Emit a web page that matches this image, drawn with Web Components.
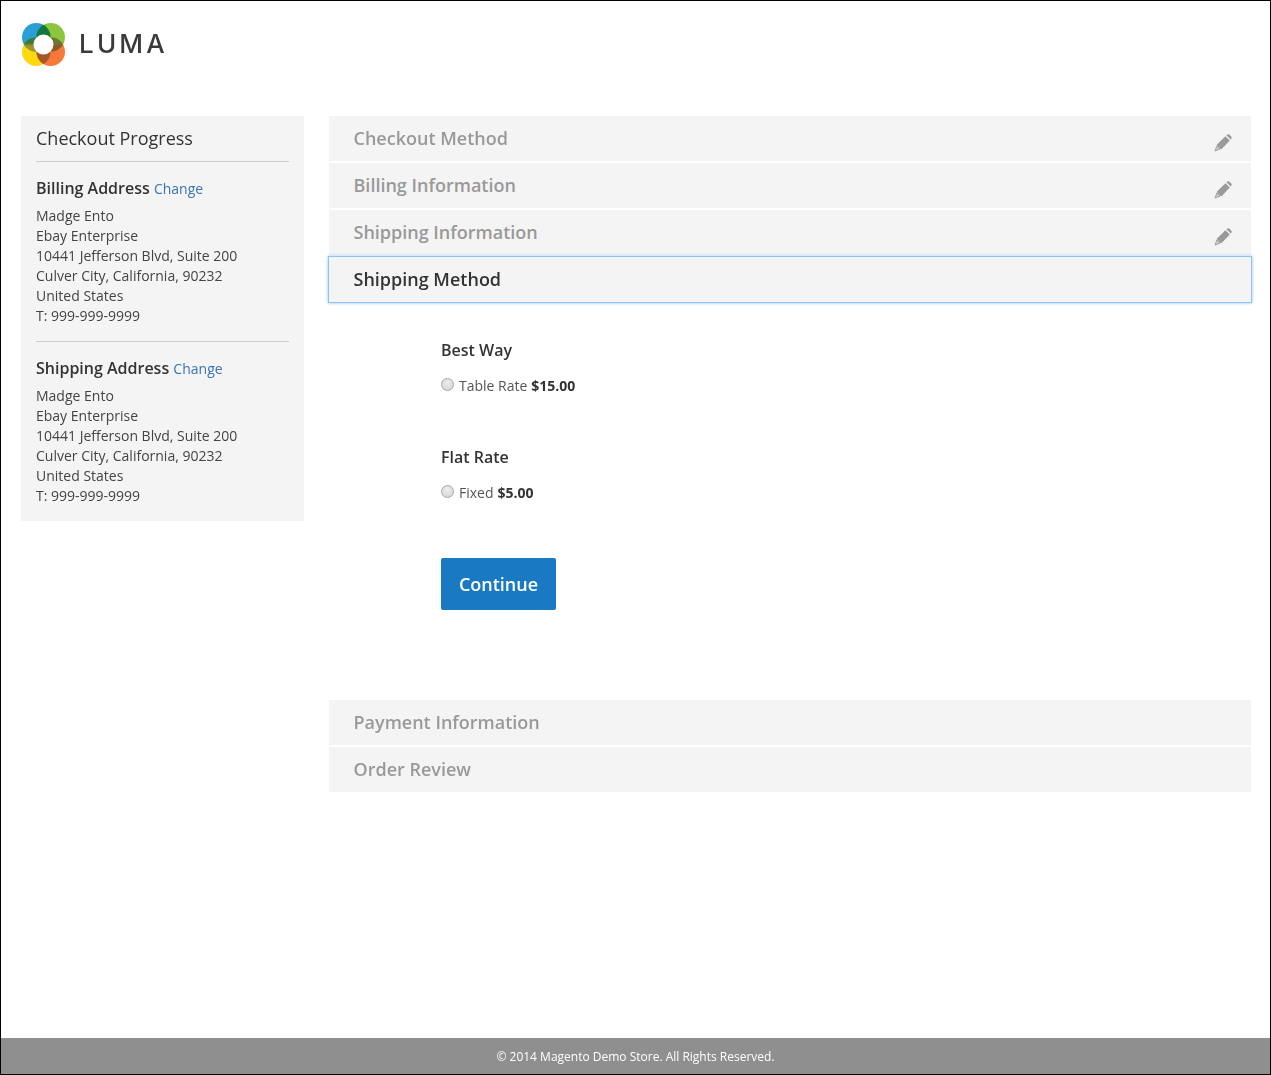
<!DOCTYPE html>
<html>
<head>
<meta charset="utf-8">
<title>Checkout</title>
<style>
  html, body { margin: 0; padding: 0; }
  body { font-family: "Open Sans", "Liberation Sans", sans-serif; color: #333; }
</style>
</head>
<body>
<checkout-page>
  <luma-logo slot="header"></luma-logo>
  <progress-panel slot="side">
    <address-block title="Billing Address"></address-block>
    <address-block title="Shipping Address"></address-block>
  </progress-panel>
  <step-bar done>Checkout Method</step-bar>
  <step-bar done>Billing Information</step-bar>
  <step-bar done>Shipping Information</step-bar>
  <step-bar active>Shipping Method</step-bar>
  <shipping-methods>
    <shipping-option title="Best Way" label="Table Rate" price="$15.00"></shipping-option>
    <shipping-option title="Flat Rate" label="Fixed" price="$5.00"></shipping-option>
    <continue-button>Continue</continue-button>
  </shipping-methods>
  <step-bar>Payment Information</step-bar>
  <step-bar>Order Review</step-bar>
  <site-footer slot="footer">© 2014 Magento Demo Store. All Rights Reserved.</site-footer>
</checkout-page>

<script>
class CheckoutPage extends HTMLElement {
  connectedCallback() {
    this.attachShadow({ mode: 'open' });
    this.shadowRoot.innerHTML = `
      <style>
        :host {
          display: flex;
          flex-direction: column;
          box-sizing: border-box;
          width: 1271px;
          height: 1075px;
          border: 1px solid #000;
        }
        .head { padding: 20px 20px 0; height: 95px; }
        .main {
          flex: 1;
          display: grid;
          grid-template-columns: 283px 922px;
          column-gap: 25px;
          align-items: start;
          padding: 0 20px;
        }
        .steps { display: flex; flex-direction: column; gap: 2px; }
      </style>
      <div class="head"><slot name="header"></slot></div>
      <div class="main">
        <slot name="side"></slot>
        <div class="steps"><slot></slot></div>
      </div>
      <slot name="footer"></slot>
    `;
  }
}
customElements.define('checkout-page', CheckoutPage);

class LumaLogo extends HTMLElement {
  connectedCallback() {
    this.attachShadow({ mode: 'open' });
    this.shadowRoot.innerHTML = `
      <style>
        :host { display: flex; align-items: center; gap: 13px; height: 46px; }
        svg { display: block; }
        span {
          font: 500 26px "Inter", "Lato", sans-serif;
          letter-spacing: 3.2px;
          color: #3a3a3a;
          line-height: 46px;
        }
        circle.c { mix-blend-mode: multiply; }
      </style>
      <svg width="45" height="46" viewBox="0 0 45 46">
        <defs>
          <linearGradient id="lensL" x1="0" y1="0" x2="0" y2="1">
            <stop offset="0.4" stop-color="#3f7a35"/><stop offset="0.6" stop-color="#a39233"/>
          </linearGradient>
          <linearGradient id="lensR" x1="0" y1="0" x2="0" y2="1">
            <stop offset="0.4" stop-color="#6a7a35"/><stop offset="0.6" stop-color="#8d5a26"/>
          </linearGradient>
        </defs>
        <g style="isolation:isolate">
          <circle class="c" cx="15.25" cy="16.25" r="14.25" fill="#2a9fd6"/>
          <circle class="c" cx="29.75" cy="16.25" r="14.25" fill="#8cc63f"/>
          <circle class="c" cx="15.25" cy="30.75" r="14.25" fill="#fdd90e"/>
          <circle class="c" cx="29.75" cy="30.75" r="14.25" fill="#f7793a"/>
        </g>
        <path fill="#14773c" d="M22.5 3.98A14.25 14.25 0 0 1 22.5 28.52A14.25 14.25 0 0 1 22.5 3.98Z"/>
        <path fill="#a5562c" d="M22.5 18.48A14.25 14.25 0 0 1 22.5 43.02A14.25 14.25 0 0 1 22.5 18.48Z"/>
        <path fill="url(#lensL)" d="M2.98 23.5A14.25 14.25 0 0 1 27.52 23.5A14.25 14.25 0 0 1 2.98 23.5Z"/>
        <path fill="url(#lensR)" d="M17.48 23.5A14.25 14.25 0 0 1 42.02 23.5A14.25 14.25 0 0 1 17.48 23.5Z"/>
        <circle cx="22.5" cy="23.5" r="10" fill="#fff"/>
      </svg>
      <span>LUMA</span>
    `;
  }
}
customElements.define('luma-logo', LumaLogo);

class ProgressPanel extends HTMLElement {
  connectedCallback() {
    this.attachShadow({ mode: 'open' });
    this.shadowRoot.innerHTML = `
      <style>
        :host {
          display: block;
          background: #f4f4f4;
          padding: 0 15px;
          height: 405px;
          box-sizing: border-box;
        }
        h2 {
          margin: 0;
          font-size: 18px;
          font-weight: 400;
          line-height: 45px;
          height: 45px;
          border-bottom: 1px solid #ccc;
          color: #333;
        }
      </style>
      <h2>Checkout Progress</h2>
      <slot></slot>
    `;
  }
}
customElements.define('progress-panel', ProgressPanel);

class AddressBlock extends HTMLElement {
  connectedCallback() {
    this.attachShadow({ mode: 'open' });
    this.shadowRoot.innerHTML = `
      <style>
        :host { display: block; height: 179px; }
        :host(:not(:last-child)) { border-bottom: 1px solid #ccc; }
        .t { padding-top: 14px; font-size: 16px; font-weight: 600; line-height: 24px; color: #333; }
        a { font-size: 14px; font-weight: 400; color: #3a74b8; text-decoration: none; }
        .lines { margin-top: 5px; font-size: 14px; line-height: 20px; color: #444; }
      </style>
      <div class="t">${this.getAttribute('title')} <a href="#">Change</a></div>
      <div class="lines">
        Madge Ento<br>Ebay Enterprise<br>10441 Jefferson Blvd, Suite 200<br>
        Culver City, California, 90232<br>United States<br>T: 999-999-9999
      </div>
    `;
  }
}
customElements.define('address-block', AddressBlock);

class StepBar extends HTMLElement {
  connectedCallback() {
    const pencil = this.hasAttribute('done') ? `
      <svg viewBox="0 0 18 18" width="18" height="18">
        <path fill="#999" d="M12.4 1.2 13.2.6Q14.2 0 15.2.6L17.4 2.8Q18 3.8 17.4 4.8L16.8 5.6Z"/>
        <path fill="#999" d="M11.4 2.2 15.8 6.6 7.2 15.4 2.6 10.9Z"/>
        <path fill="#cfcfcf" stroke="#999" stroke-width=".9" d="M2.9 12 6 15.1 1 17Z"/>
      </svg>` : '';
    this.attachShadow({ mode: 'open' });
    this.shadowRoot.innerHTML = `
      <style>
        :host {
          display: flex;
          align-items: center;
          justify-content: space-between;
          box-sizing: border-box;
          height: 45px;
          padding: 0 19px 2px 24.5px;
          background: #f4f4f4;
          font-size: 18px;
          font-weight: 600;
          color: #999;
        }
        :host([active]) {
          color: #333;
          height: 47px;
          margin: -1px;
          border: 1px solid #8ec2f2;
          box-shadow: 0 0 3px #8ec2f2;
        }
        svg { display: block; margin-top: 10px; }
      </style>
      <slot></slot>${pencil}
    `;
  }
}
customElements.define('step-bar', StepBar);

class ShippingMethods extends HTMLElement {
  connectedCallback() {
    this.attachShadow({ mode: 'open' });
    this.shadowRoot.innerHTML = `
      <style>
        :host {
          display: block;
          height: 394px;
          box-sizing: border-box;
          padding: 32px 0 0 112px;
        }
      </style>
      <slot></slot>
    `;
  }
}
customElements.define('shipping-methods', ShippingMethods);

class ShippingOption extends HTMLElement {
  connectedCallback() {
    this.attachShadow({ mode: 'open' });
    this.shadowRoot.innerHTML = `
      <style>
        :host { display: block; height: 107px; }
        h3 { margin: 0; font-size: 16px; font-weight: 600; line-height: 28px; color: #333; }
        label { display: flex; align-items: center; margin-top: 12px; font-size: 14px; line-height: 20px; color: #555; }
        input {
          appearance: none;
          -webkit-appearance: none;
          box-sizing: border-box;
          width: 13px;
          height: 13px;
          margin: -4px 5px 0 0;
          border: 1px solid #a6a6a6;
          border-radius: 50%;
          background: radial-gradient(circle at 50% 35%, #ececec, #d2d2d2);
        }
        b { font-weight: 700; color: #333; margin-left: 4px; }
      </style>
      <h3>${this.getAttribute('title')}</h3>
      <label><input type="radio" name="m">${this.getAttribute('label')} <b>${this.getAttribute('price')}</b></label>
    `;
  }
}
customElements.define('shipping-option', ShippingOption);

class ContinueButton extends HTMLElement {
  connectedCallback() {
    this.attachShadow({ mode: 'open' });
    this.shadowRoot.innerHTML = `
      <style>
        :host { display: block; padding-top: 8px; }
        button {
          display: block;
          width: 115px;
          height: 52px;
          border: 0;
          border-radius: 2px;
          background: #1979c3;
          color: #fff;
          font: 600 18px "Open Sans", sans-serif;
        }
      </style>
      <button><slot></slot></button>
    `;
  }
}
customElements.define('continue-button', ContinueButton);

class SiteFooter extends HTMLElement {
  connectedCallback() {
    this.attachShadow({ mode: 'open' });
    this.shadowRoot.innerHTML = `
      <style>
        :host {
          display: block;
          height: 36px;
          line-height: 37px;
          background: #8f8f8f;
          color: #fff;
          text-align: center;
          font-size: 12px;
          font-weight: 400;
        }
      </style>
      <slot></slot>
    `;
  }
}
customElements.define('site-footer', SiteFooter);
</script>
</body>
</html>
